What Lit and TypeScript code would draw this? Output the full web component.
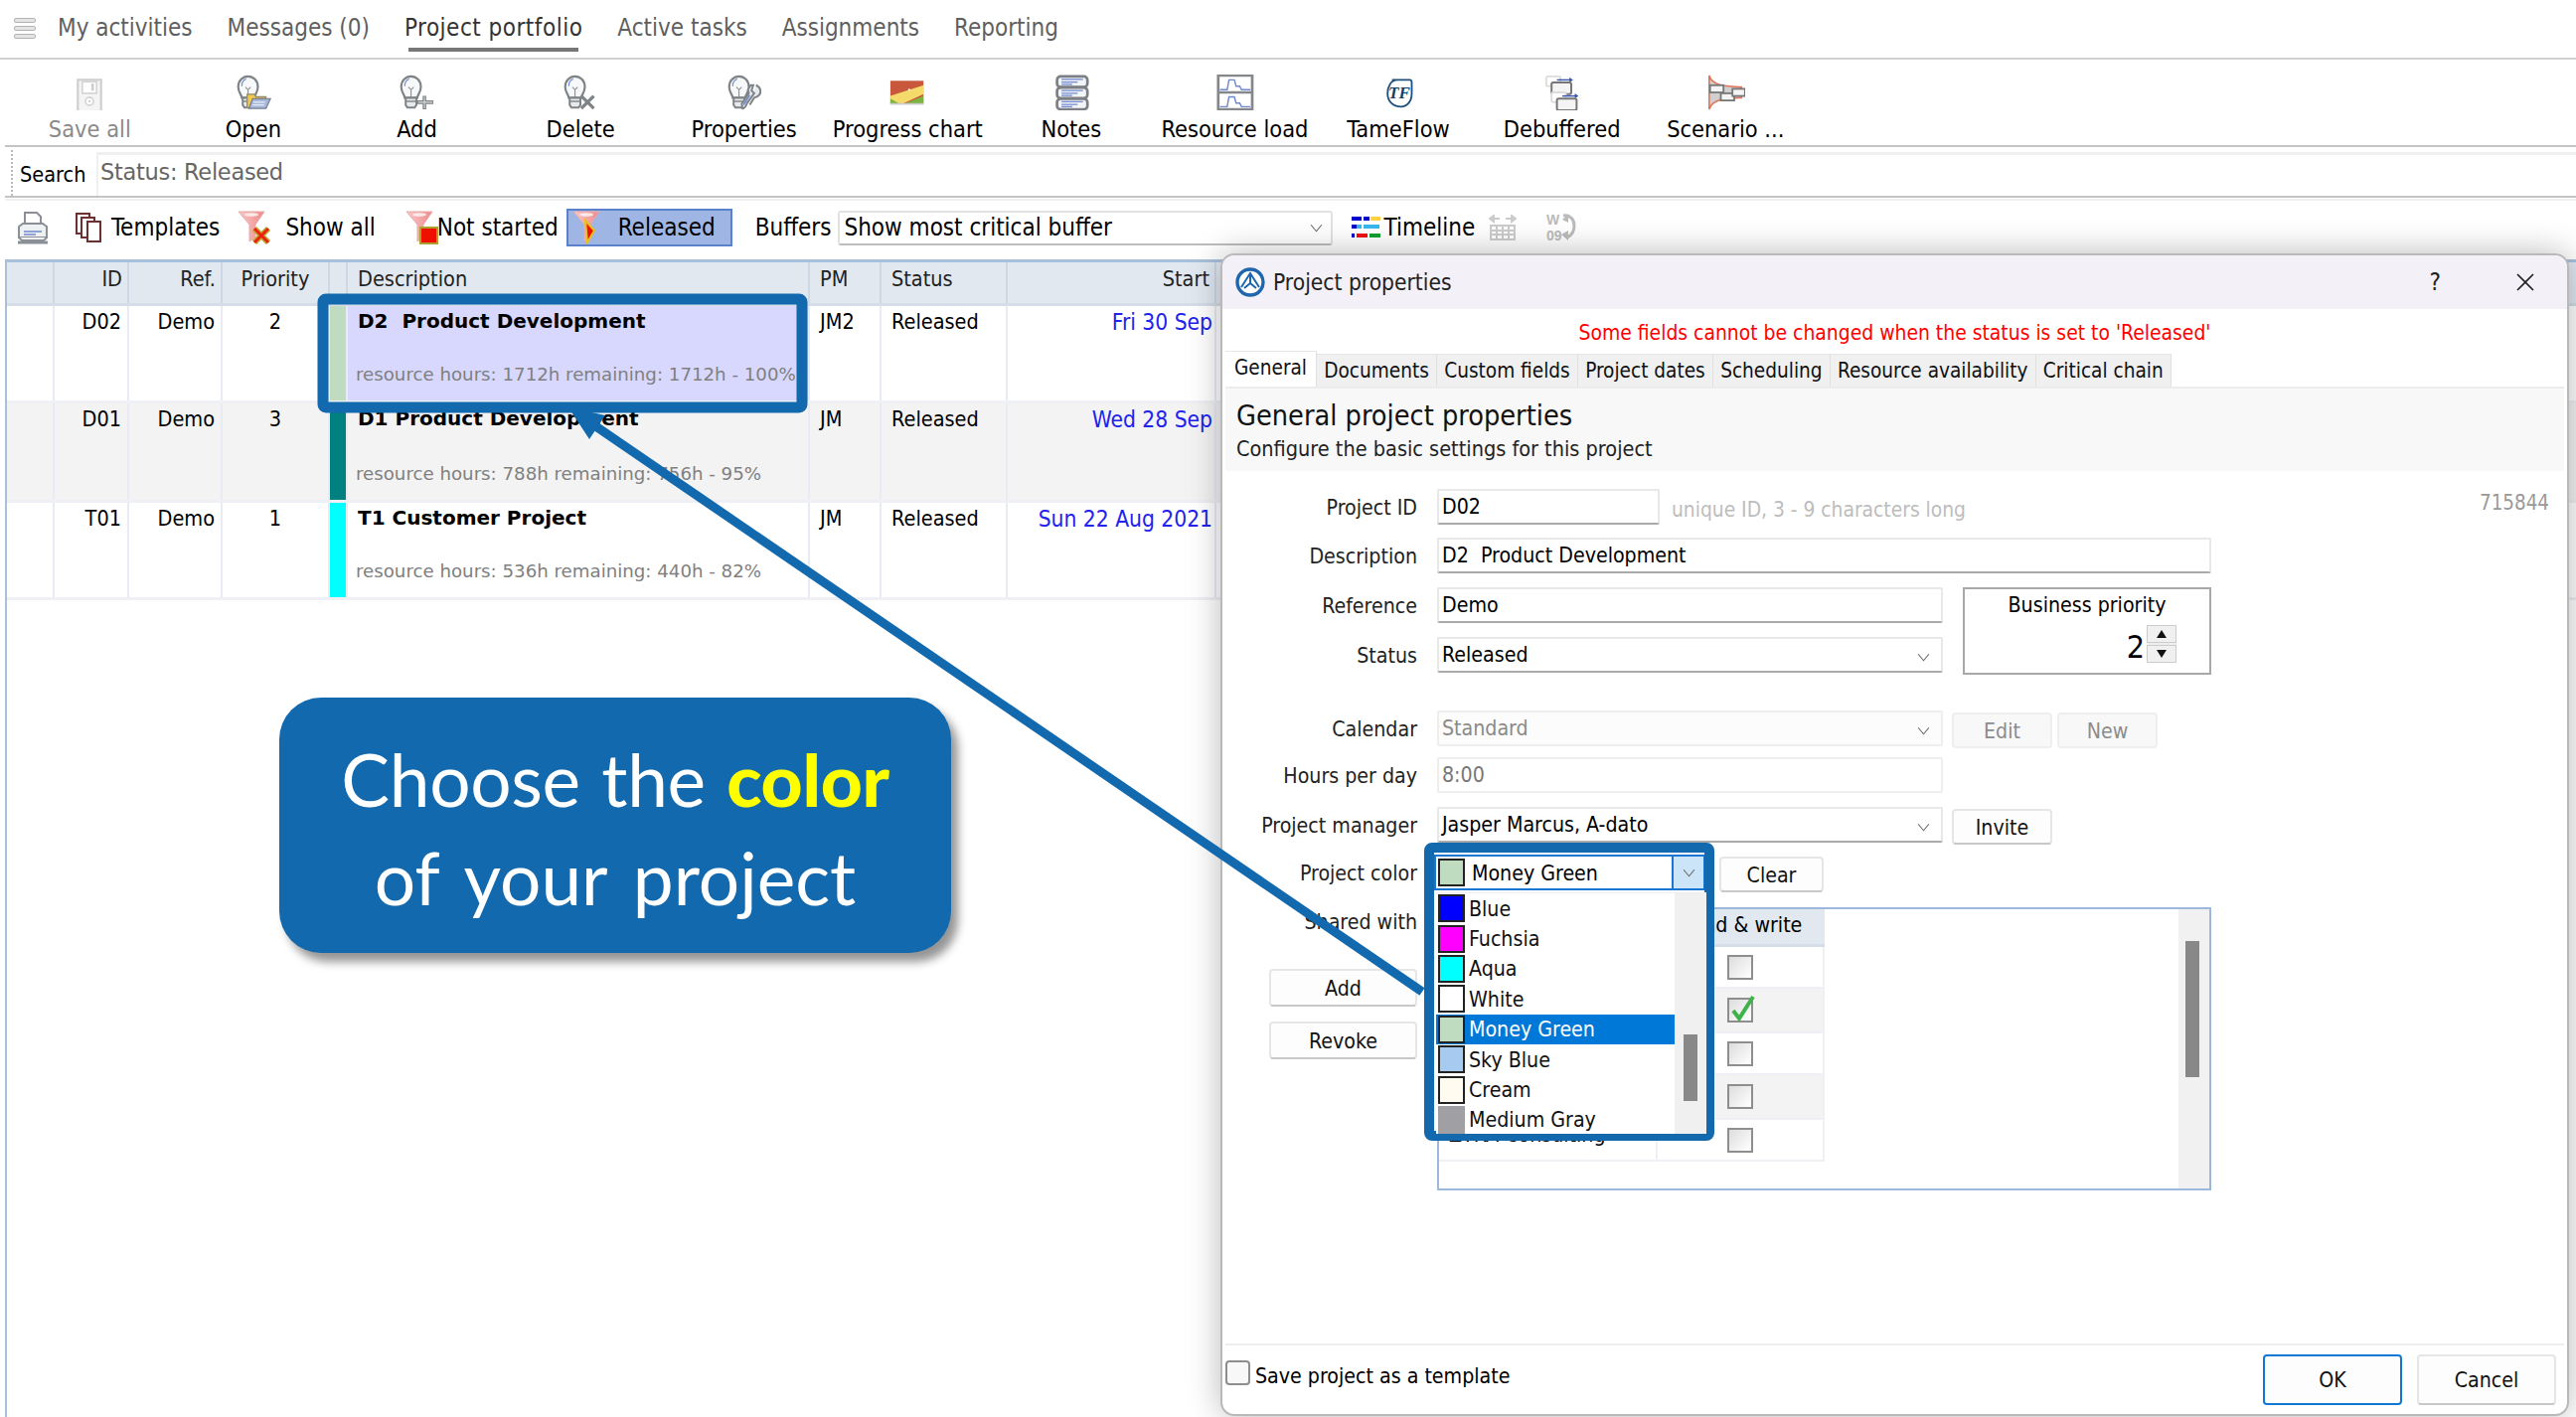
import { LitElement, html, css, svg } from "lit";
import { customElement } from "lit/decorators.js";

const bulb = (extra: unknown) => svg`
  <path d="M7 26c0-3-4-6-4-12C3 7 8 2 14 2s11 5 11 12c0 6-4 9-4 12z" fill="#f7f8fa" stroke="#7f8386" stroke-width="2.4"/>
  <path d="M7 13c0-4 2-7 5-8" fill="none" stroke="#6f8fd8" stroke-width="1.4"/>
  <path d="M11 14l3 3 3-3M14 17v9" fill="none" stroke="#8a8d90" stroke-width="1.2"/>
  <path d="M8 26h12v8l-2 3h-8l-2-3z" fill="#e8e9ea" stroke="#7f8386" stroke-width="2.2"/>
  <path d="M8 30h12" stroke="#7f8386" stroke-width="1.6"/>
  ${extra}`;

const stack = (x: number, y: number) => svg`
  <rect x=${x} y=${y} width="16" height="11" fill="#fff" stroke="#dcdcdc" stroke-width="2" rx="2"/>
  <path d="M${x + 12} ${y + 4}h16" stroke="#3a55b0" stroke-width="1.6"/>
  <path d="M${x + 26} ${y + 1}l4 3-4 3z" fill="#3a55b0"/>
  <rect x=${x + 6} y=${y + 7} width="22" height="13" fill="#f4f4f4" stroke="#777" stroke-width="2.2" rx="2"/>`;

const ICONS: Record<string, unknown> = {
  save: svg`<rect x="7" y="7" width="26" height="36" fill="#f4f4f4" stroke="#cfcfcf" stroke-width="2.4" transform="translate(0 -1) scale(1 .98)"/>
    <rect x="12" y="8" width="16" height="13" fill="#fff" stroke="#cfcfcf" stroke-width="1.6"/>
    <rect x="22" y="10" width="3" height="8" fill="#cfcfcf"/>
    <circle cx="20" cy="30" r="4.5" fill="#fff" stroke="#cfcfcf" stroke-width="1.6"/><circle cx="20" cy="30" r="1" fill="#bbb"/>`,
  open: bulb(svg`<path d="M13 37V22h8l2 3h11v12z" fill="#f5c84e" stroke="#8d8a70" stroke-width="1.4"/>
    <path d="M15 38l4-11h20l-5 11z" fill="#a8b8dc" stroke="#77808e" stroke-width="1.4"/>
    <path d="M20 31h13M19 34h13" stroke="#e7ecf5" stroke-width="1.2"/>`),
  add: bulb(svg`<path d="M29 24v15M21 31h18" stroke="#7f8386" stroke-width="4"/><path d="M29 25v13M22 31h16" stroke="#d8d9da" stroke-width="1.2"/>`),
  del: bulb(svg`<path d="M21 24l14 14M35 24L21 38" stroke="#7f8386" stroke-width="3.6"/>`),
  prop: bulb(svg`<path d="M30 12l-2 6 3 3-8 11c-1 3-3 6-5 6l-1-5 8-12-1-4 3-5z M33 12c3 1 5 4 5 7 0 4-3 6-7 7l-5 8" fill="#e8eaf0" stroke="#7f8386" stroke-width="2.2"/><path d="M26 23l-7 11" stroke="#5f80d0" stroke-width="1.5"/>`),
  chart: svg`<rect x="1" y="7" width="37" height="26" fill="#c8573c"/><path d="M1 33V24L38 12v10L14 33z" fill="#f4d96b"/><path d="M1 33v-6l11 6zM38 24v9H16z" fill="#7cb342"/><circle cx="22" cy="17" r="1.2" fill="#fff"/><path d="M1 33h37" stroke="#ccc" stroke-width="2"/>`,
  notes: svg`${[2, 14.5, 27].map(
    (y) => svg`<rect x="4" y=${y} width="34" height="12" rx="4" fill="#f3f4f7" stroke="#7c7f83" stroke-width="3"/>
      <path d="M9 ${y + 3.5}h24M9 ${y + 6.5}h18M9 ${y + 9}h12" stroke="#6f88cf" stroke-width="1.3"/>`,
  )}`,
  load: svg`<rect x="2" y="1" width="38" height="38" fill="#fff" stroke="#85888b" stroke-width="3"/><path d="M2 20h38" stroke="#85888b" stroke-width="3"/>
    <path d="M4 17h8l2-11h6l2 7h4l2 4h10M4 36h8l2-11h6l2 7h4l2 4h10" fill="none" stroke="#6f88cf" stroke-width="1.6"/>`,
  tame: svg`<path d="M13 6h20c1 0 2 1 2 3v12c0 9-5 15-12 15-9 0-15-6-15-15 0-8 4-15 11-15z" fill="#fff" stroke="#1c4f7c" stroke-width="2"/>
    <text x="21" y="27" font-size="19" font-family="Liberation Serif,serif" font-style="italic" font-weight="700" fill="#163f66" text-anchor="middle">TF</text>`,
  debuf: svg`${stack(2, 2)}${stack(8, 20)}`,
  scen: svg`<path d="M2 1c4 12 18 12 36 13v12C20 27 6 27 2 39z" fill="#cfcfcf" stroke="#e2765a" stroke-width="1.8"/>
    <rect x="3" y="12" width="15" height="8" fill="#f4f4f4" stroke="#777" stroke-width="2"/>
    <rect x="15" y="21" width="15" height="8" fill="#f4f4f4" stroke="#777" stroke-width="2"/>
    <rect x="28" y="16" width="14" height="8" fill="#f4f4f4" stroke="#777" stroke-width="2"/>`,
};

const TOOLS: [string, string, boolean?][] = [
  ["Save all", "save", true],
  ["Open", "open"],
  ["Add", "add"],
  ["Delete", "del"],
  ["Properties", "prop"],
  ["Progress chart", "chart"],
  ["Notes", "notes"],
  ["Resource load", "load"],
  ["TameFlow", "tame"],
  ["Debuffered", "debuf"],
  ["Scenario ...", "scen"],
];

const NAV = ["My activities", "Messages (0)", "Project portfolio", "Active tasks", "Assignments", "Reporting"];

const ROWS = [
  { id: "D02", ref: "Demo", pr: "2", color: "#c0dcc0", title: "D2  Product Development", sub: "resource hours: 1712h remaining: 1712h - 100%", pm: "JM2", start: "Fri 30 Sep", cls: "sel" },
  { id: "D01", ref: "Demo", pr: "3", color: "#008080", title: "D1 Product Development", sub: "resource hours: 788h remaining: 756h - 95%", pm: "JM", start: "Wed 28 Sep", cls: "alt" },
  { id: "T01", ref: "Demo", pr: "1", color: "#00ffff", title: "T1 Customer Project", sub: "resource hours: 536h remaining: 440h - 82%", pm: "JM", start: "Sun 22 Aug 2021", cls: "" },
];

const COLORS: [string, string][] = [
  ["Blue", "#0000ff"],
  ["Fuchsia", "#ff00ff"],
  ["Aqua", "#00ffff"],
  ["White", "#ffffff"],
  ["Money Green", "#c0dcc0"],
  ["Sky Blue", "#a6caf0"],
  ["Cream", "#fffbf0"],
  ["Medium Gray", "#a0a0a4"],
];

const chevron = html`<svg class="chev" viewBox="0 0 12 8"><path d="M1 1l5 6 5-6" fill="none" stroke="#666" stroke-width="1"/></svg>`;

const funnel = (extra: unknown) => html`<svg class="funnel" viewBox="0 0 34 34">
  <defs><linearGradient id="fg" x1="0" x2="1"><stop offset="0" stop-color="#f9c8c8"/><stop offset="1" stop-color="#f08a8a"/></linearGradient></defs>
  <path d="M1 1h26l-9 13v13l-6 4V14z" fill="url(#fg)" stroke="#e5aaaa" stroke-width="1"/>
  <ellipse cx="14" cy="4" rx="7" ry="1.8" fill="#fbe9e9"/>
  ${extra}
</svg>`;

const FX = svg`<path d="M17 18l14 14M31 18L17 32" stroke="#b5b030" stroke-width="6"/><path d="M17 18l14 14M31 18L17 32" stroke="#f02010" stroke-width="3"/>`;
const FS = svg`<rect x="15" y="17" width="17" height="16" fill="#f01000" stroke="#a8a030" stroke-width="2"/>`;
const FR = svg`<path d="M13 10l9 10-7 12z" fill="#f01000" stroke="#e8c020" stroke-width="2"/>`;

@customElement("app-root")
export class AppRoot extends LitElement {
  static styles = css`
    :host {
      display: block;
      position: relative;
      width: 2592px;
      height: 1426px;
      overflow: hidden;
      background: #fff;
      color: #000;
      font-family: "DejaVu Sans", sans-serif;
      font-stretch: condensed;
      font-size: 24px;
    }
    .main { display: flex; flex-direction: column; height: 1426px; }
    .nav {
      height: 58px; flex: none; display: flex; align-items: center; padding-left: 14px;
      border-bottom: 2px solid #d2d2d2; box-sizing: content-box;
    }
    .burger { width: 22px; display: flex; flex-direction: column; gap: 3px; margin-right: 22px; margin-top: -2px; }
    .burger i { display: block; height: 5px; border-radius: 2px; background: #e4e4e4; border: 1px solid #b4b4b4; box-sizing: border-box; }
    .nav a { color: #5f5f5f; font-size: 24px; margin-right: 35px; position: relative; line-height: 34px; margin-top: -2px; }
    .nav a.on { color: #333; letter-spacing: 0.5px; }
    .nav a.on::after { content: ""; position: absolute; left: 4px; right: 4px; bottom: -7px; height: 4px; background: #777; }
    .tools { height: 86px; flex: none; display: flex; border-bottom: 2px solid #c4c4c4; margin-left: 5px; padding-left: 3px; }
    .tool { width: 164.6px; flex: none; display: flex; flex-direction: column; align-items: center; }
    .tool svg { width: 40px; height: 40px; margin-top: 15px; }
    .tool span { font-size: 23.4px; line-height: 32px; margin-top: 3px; white-space: nowrap; }
    .tool.off span { color: #8a8a8a; }
    .search { height: 49px; flex: none; display: flex; margin-left: 5px; border-bottom: 2px solid #c4c4c4; position: relative; }
    .grip { width: 0; border-left: 2px dotted #bbb; margin: 3px 0 0 6px; }
    .slabel { width: 84px; padding-left: 7px; box-sizing: border-box; line-height: 56px; font-size: 21.5px; }
    .sfield { flex: 1; margin-top: 5px; border-top: 3px solid #f0f0f0; border-left: 2px solid #f0f0f0; padding-left: 2px; color: #666; font-size: 22.5px; line-height: 34px; font-stretch: normal; letter-spacing: -0.3px; }
    .filters { height: 50px; padding-top: 2px; flex: none; display: flex; align-items: center; margin-left: 5px; border-top: 2px solid #f0f0f0; margin-top: 1px; padding-left: 12px; font-size: 24px; }
    .filters svg { flex: none; }
    .print { width: 32px; height: 34px; margin-right: 27px; }
    .templ { width: 26px; height: 30px; margin-right: 10px; }
    .flabel { white-space: nowrap; }
    .funnel { width: 34px; height: 34px; }
    .m1 { margin-right: 18px; }
    .m2 { margin-left: 14px; margin-right: 30px; }
    .m3 { margin-left: -2px; }
    .released {
      width: 167px; height: 38px; box-sizing: border-box; background: #9fb5e3; border: 2px solid #5b80cc; margin-left: 8px;
      display: flex; align-items: center; padding-left: 4px; margin-right: 23px;
    }
    .released .flabel { margin-left: 12px; }
    .fsel {
      width: 498px; height: 35px; margin-left: 7px; box-sizing: border-box; border: 2px solid #e2e2e2; border-bottom-color: #bdbdbd; background: #fff;
      display: flex; align-items: center; justify-content: space-between; padding: 0 8px 0 4px; margin-right: 18px; border-radius: 3px;
    }
    .chev { width: 13px; height: 9px; flex: none; }
    .tl { width: 31px; height: 24px; margin-right: 2px; }
    .fit { width: 28px; height: 26px; margin-left: 14px; margin-right: 30px; }
    .week { width: 30px; height: 30px; }
    .grid { flex: 1; margin: 7px 0 0 5px; border-left: 2px solid #a9c0dc; border-top: 3px solid #a9c0dc; }
    .row, .head { display: grid; grid-template-columns: 48px 75px 94px 108px 18px 465px 72px 127px 210px; }
    .head { height: 44px; background: #e1e8f0; border-bottom: 3px solid #d4dde8; font-size: 21.5px; line-height: 34px; box-sizing: border-box; color: #222; }
    .head > div { border-right: 2px solid #ced8e4; padding: 0 6px; white-space: nowrap; box-sizing: border-box; }
    .head .lft { padding-left: 10px; }
    .head .pad { padding-right: 5px !important; }
    .row { height: 98px; border-bottom: 3px solid #eef0f5; box-sizing: border-box; font-size: 21.5px; line-height: 32px; }
    .row.alt { background: #f3f3f3; height: 100px; }
    .row > div { border-right: 2px solid #e8ebf2; padding: 0 6px; box-sizing: border-box; white-space: nowrap; }
    .row > div.lft { padding-left: 10px; }
    .r { text-align: right; }
    .c { text-align: center; }
    .pad { padding-right: 6px !important; }
    .bar { padding: 0 !important; }
    .descr { display: flex; flex-direction: column; justify-content: space-between; padding-bottom: 11px !important; padding-left: 8px !important; }
    .descr b { font-stretch: normal; font-size: 20px; white-space: pre; padding-left: 2px; margin-top: -1px; }
    .descr small { font-stretch: normal; font-size: 18.2px; color: #808080; line-height: 30px; }
    .row.sel .descr { background: #d8d8ff; }
    .date { color: #2222ee; text-align: right; padding-right: 2px !important; font-size: 22.6px; }

    .dlg {
      position: absolute; left: 1228px; top: 255px; width: 1357px; height: 1170px; box-sizing: border-box;
      background: #fff; border: 2px solid #b9b9b9; border-radius: 14px; box-shadow: 0 0 34px rgba(0, 0, 0, .28);
      display: flex; flex-direction: column; padding: 0 3px; font-size: 21.2px; overflow: hidden;
    }
    .title { height: 54px; margin: 0 -3px; flex: none; display: flex; align-items: center; background: #f3f0f7; padding-left: 13px; color: #222; font-size: 22.6px; }
    .title svg.logo { width: 30px; height: 30px; margin-right: 8px; }
    .title .sp { flex: 1; }
    .q { margin-right: 76px; font-size: 24px; }
    .x { width: 18px; height: 18px; margin-right: 33px; }
    .msg { height: 42px; flex: none; text-align: center; color: #f00; font-size: 20.9px; line-height: 48px; }
    .tabs { display: flex; align-items: flex-end; height: 36px; flex: none; border-bottom: 2px solid #ececec; box-sizing: content-box; font-size: 20.6px; }
    .tab { height: 33px; line-height: 32px; background: #f0f0f0; border-right: 1px solid #e0e0e0; border-top: 1px solid #e6e6e6; padding: 0 7.2px; box-sizing: border-box; white-space: nowrap; color: #111; }
    .tab.on { height: 36px; background: #fff; padding: 0 9px; line-height: 32px; }
    .panel { flex: 1; display: flex; flex-direction: column; border-bottom: 2px solid #eee; min-height: 0; }
    .phead { height: 83px; flex: none; background: #f8f8f8; padding: 8px 0 0 11px; box-sizing: border-box; }
    .phead h2 { margin: 0; font-weight: normal; font-size: 28.6px; line-height: 38px; color: #111; }
    .phead p { margin: 0; font-size: 21.5px; line-height: 30px; color: #222; }
    .form {
      position: relative; display: grid; grid-template-columns: 213px 509px 261px;
      grid-template-rows: 49px 50px 50px 74px 47px 50px 48px 53px 285px; padding-top: 18px;
    }
    .lbl { text-align: right; padding-right: 20px; line-height: 38px; color: #222; white-space: nowrap; }
    .id { position: absolute; right: 15px; top: 20px; color: #999; font-size: 20.4px; }
    .inp {
      height: 36px; box-sizing: border-box; border: 2px solid #e8e8e8; border-bottom-color: #aaa; background: #fff;
      padding: 0 3px; line-height: 30px; display: flex; align-items: center; justify-content: space-between; white-space: pre; border-radius: 2px;
    }
    .chev2 { margin-right: 8px; }
    .inp.dis { border-color: #eee; color: #8a8a8a; background: #fcfcfc; }
    .inp.ro { border-color: #eee; color: #777; }
    .idrow { display: flex; grid-column: 2 / 4; }
    .idrow .inp { width: 224px; }
    .hint { color: #bdbdbd; margin-left: 12px; line-height: 42px; font-size: 20.8px; }
    .span2 { grid-column: 2 / 4; width: 779px; }
    .biz {
      grid-column: 3; grid-row: 3 / 5; margin-left: 20px; width: 250px; height: 88px; box-sizing: border-box;
      border: 2px solid #a8a8a8; text-align: center; line-height: 32px; position: relative;
    }
    .bizv { position: absolute; right: 65px; bottom: 6px; font-size: 32px; line-height: 40px; }
    .spin { position: absolute; right: 33px; bottom: 10px; width: 30px; height: 38px; background: #eee; display: flex; flex-direction: column; gap: 2px; }
    .spin i { flex: 1; background: #f0f0f0; border: 1px solid #ccc; display: flex; align-items: center; justify-content: center; }
    .spin svg { width: 10px; height: 8px; }
    .btns { display: flex; gap: 5px; margin-left: 9px; padding-top: 2px; }
    .btn {
      height: 36px; box-sizing: border-box; border: 2px solid #e6e6e6; border-bottom-color: #c8c8c8; border-radius: 4px; background: #fdfdfd;
      display: flex; align-items: center; justify-content: center; color: #111;
    }
    .b101 { width: 101px; }
    .btn.dis { color: #8c8c8c; background: #f8f8f8; border-color: #eee; }
    .colorrow { grid-column: 2 / 4; display: flex; gap: 14px; }
    .colorsel {
      width: 273px; height: 36px; margin-left: -3px; box-sizing: border-box; border: 2px solid #1976d2; display: flex; align-items: center; position: relative; background: #fff;
    }
    .colorrow .btn { width: 105px; margin-top: 2px; }
    .sw { width: 27px; height: 28px; box-sizing: border-box; border: 2px solid #222; flex: none; margin: 0 7px 0 2px; }
    .sw.nb { border-color: #a0a0a4; }
    .dbtn { width: 30px; align-self: stretch; background: #cce4f7; border-left: 2px solid #1976d2; display: flex; align-items: center; justify-content: center; margin-left: auto; }
    .list {
      position: absolute; left: 0; top: 36px; width: 272px; height: 243px; background: #fff; z-index: 5; display: flex; flex-direction: column; overflow: hidden;
      border-top: 1px solid #eee; box-sizing: border-box;
    }
    .li { height: 30.4px; flex: none; display: flex; align-items: center; width: 240px; color: #111; }
    .li .sw { margin-right: 4px; }
    .li.on { background: #0078d7; color: #fff; }
    .lscroll { position: absolute; right: 0; top: 0; bottom: 0; width: 32px; background: #f0f0f0; }
    .lscroll i { position: absolute; left: 9px; width: 14px; top: 142px; height: 67px; background: #888; }
    .sharedcol { display: flex; flex-direction: column; align-items: flex-end; }
    .sharedcol .lbl { line-height: 30px; }
    .sharedcol .btn { width: 149px; height: 38px; margin-right: 20px; margin-top: 15px; }
    .sharedcol .btn.first { margin-top: 32px; }
    .share {
      grid-column: 2 / 4; width: 779px; height: 285px; box-sizing: border-box; border: 2px solid #9cb9dd; position: relative;
    }
    .shead { height: 38px; width: 388px; display: grid; grid-template-columns: 220px 168px; background: #e1e8f0; text-align: center; line-height: 32px; box-sizing: border-box; border-bottom: 3px solid #d4dde8; }
    .srow { width: 388px; display: grid; grid-template-columns: 220px 168px; border-bottom: 2px solid #eef0f5; box-sizing: border-box; }
    .srow.alt { background: #f3f3f3; }
    .srow > div:first-child { border-right: 2px solid #eef0f5; padding-left: 10px; line-height: 30px; }
    .srow > div:last-child { display: flex; align-items: center; padding-left: 70px; border-right: 2px solid #eef0f5; }
    .s42 { height: 42px; }
    .s45 { height: 45px; }
    .chk { width: 26px; height: 25px; box-sizing: border-box; border: 2px solid #8e8e8e; background: linear-gradient(135deg, #ddd, #fff); position: relative; }
    .chk svg { position: absolute; left: -1px; top: -6px; width: 28px; height: 30px; }
    .sscroll { position: absolute; right: 0; top: 0; bottom: 0; width: 31px; background: #f1f1f1; }
    .sscroll i { position: absolute; left: 7px; width: 14px; top: 32px; height: 137px; background: #888; }
    .foot { height: 69px; flex: none; display: flex; align-items: flex-start; }
    .foot .cb { width: 25px; height: 25px; box-sizing: border-box; border: 2px solid #8e8e8e; border-radius: 4px; margin-top: 15px; background: #f8f8f8; }
    .foot span { margin: 16px 0 0 5px; line-height: 30px; }
    .foot .sp { flex: 1; }
    .foot .btn { width: 140px; height: 51px; margin-top: 9px; }
    .foot .ok { border: 2px solid #0f78d4; margin-right: 15px; }
    .foot .cancel { margin-right: 8px; }

    .anno { position: absolute; left: 0; top: 0; width: 2592px; height: 1426px; pointer-events: none; }
    .callout {
      position: absolute; left: 281px; top: 702px; width: 676px; height: 257px; box-sizing: border-box; padding-top: 3px; background: #1369ae; border-radius: 42px;
      box-shadow: 7px 9px 10px rgba(0, 0, 0, .42);
      font-family: Lato, sans-serif; font-stretch: normal; color: #fff; font-size: 73px; text-align: center;
      display: flex; flex-direction: column; justify-content: center; line-height: 102px; word-spacing: 3px;
    }
    .callout .l1 { letter-spacing: -0.3px; margin-top: 3px; margin-bottom: -3px; }
    .callout .l2 { word-spacing: 8px; }
    .callout b { color: #ff0; font-weight: 900; }
  `;

  private select(text: string, cls = "") {
    return html`<div class="inp ${cls}">${text}<span class="chev2">${chevron}</span></div>`;
  }

  private check(on = false) {
    return html`<div class="chk">${on
      ? html`<svg viewBox="0 0 28 30"><path d="M5 17l6 8L25 3" fill="none" stroke="#3fb24a" stroke-width="4"/></svg>`
      : ""}</div>`;
  }

  render() {
    return html`
      <div class="main">
        <div class="nav">
          <div class="burger"><i></i><i></i><i></i></div>
          ${NAV.map((n, i) => html`<a class=${i === 2 ? "on" : ""}>${n}</a>`)}
        </div>
        <div class="tools">
          ${TOOLS.map(
            ([t, ic, off]) => html`<div class="tool ${off ? "off" : ""}">
              <svg viewBox="0 0 40 40">${ICONS[ic]}</svg><span>${t}</span>
            </div>`,
          )}
        </div>
        <div class="search">
          <div class="grip"></div>
          <div class="slabel">Search</div>
          <div class="sfield">Status: Released</div>
        </div>
        <div class="filters">
          <svg class="print" viewBox="0 0 32 34">
            <path d="M8 14V2h12l4 4v8" fill="#fff" stroke="#8b9096" stroke-width="2"/>
            <path d="M2 16l4-3h20l4 3v11H2z" fill="#eef0f2" stroke="#8b9096" stroke-width="2"/>
            <path d="M1 32h30" stroke="#8b9096" stroke-width="3"/>
            <path d="M7 21h18M7 24h12" stroke="#6f88cf" stroke-width="1.5"/>
            <path d="M2 27l3 3h22l3-3" fill="#eef0f2" stroke="#8b9096" stroke-width="2"/>
          </svg>
          <svg class="templ" viewBox="0 0 26 30">
            <rect x="1" y="1" width="13" height="20" fill="#fff" stroke="#6b3030" stroke-width="2"/>
            <rect x="6" y="5" width="13" height="20" fill="#fff" stroke="#6b3030" stroke-width="2"/>
            <rect x="12" y="9" width="13" height="20" fill="#fff" stroke="#6b3030" stroke-width="2"/>
          </svg>
          <span class="flabel m1">Templates</span>
          ${funnel(FX)}
          <span class="flabel m2">Show all</span>
          ${funnel(FS)}
          <span class="flabel m3">Not started</span>
          <div class="released">${funnel(FR)}<span class="flabel">Released</span></div>
          <span class="flabel">Buffers</span>
          <div class="fsel"><span>Show most critical buffer</span>${chevron}</div>
          <svg class="tl" viewBox="0 0 31 24">
            <path d="M1 3h10M13 3h6" stroke="#00c" stroke-width="4"/><path d="M20 3h10" stroke="#ffd23f" stroke-width="4"/>
            <path d="M1 11h10M13 11h16" stroke="#39b7f0" stroke-width="4"/><path d="M1 11h5" stroke="#00c" stroke-width="4"/>
            <path d="M1 20h3" stroke="#00c" stroke-width="4"/><path d="M6 20h11" stroke="#f01010" stroke-width="4"/><path d="M19 20h11" stroke="#10a030" stroke-width="4"/>
          </svg>
          <span class="flabel">Timeline</span>
          <svg class="fit" viewBox="0 0 28 26">
            <path d="M1 4h10M17 4h10M1 4l4-3v6zM27 4l-4-3v6z" stroke="#ccc" fill="#ccc" stroke-width="2"/>
            <path d="M2 11h24v14H2zM2 16h24M2 20h24M8 11v14M14 11v14M20 11v14" fill="none" stroke="#ccc" stroke-width="2"/>
          </svg>
          <svg class="week" viewBox="0 0 30 30">
            <text x="0" y="12" font-size="14" font-weight="700" fill="#bbb" font-family="Liberation Sans,sans-serif">W</text>
            <text x="0" y="28" font-size="14" font-weight="700" fill="#bbb" font-family="Liberation Sans,sans-serif">09</text>
            <path d="M17 3c7-1 11 4 11 10s-3 10-7 12" fill="none" stroke="#bbb" stroke-width="3"/>
            <path d="M15 22l7 6v-10zM16 7l6-6v9z" fill="#bbb"/>
          </svg>
        </div>
        <div class="grid">
          <div class="head">
            <div></div><div class="r pad">ID</div><div class="r pad">Ref.</div><div class="c">Priority</div><div></div>
            <div class="lft">Description</div><div class="lft">PM</div><div class="lft">Status</div><div class="r pad">Start</div>
          </div>
          ${ROWS.map(
            (r) => html`<div class="row ${r.cls}">
              <div></div><div class="r pad">${r.id}</div><div class="r pad">${r.ref}</div><div class="c">${r.pr}</div>
              <div class="bar" style="background:${r.color}"></div>
              <div class="descr"><b>${r.title}</b><small>${r.sub}</small></div>
              <div class="lft">${r.pm}</div><div class="lft">Released</div><div class="date">${r.start}</div>
            </div>`,
          )}
        </div>
      </div>

      <div class="dlg">
        <div class="title">
          <svg class="logo" viewBox="0 0 30 30">
            <circle cx="15" cy="15" r="13" fill="#fff" stroke="#1f66ad" stroke-width="3.4"/>
            <path d="M6 20L15 6l9 14M15 6v10l-6 5M15 16l6 5" fill="none" stroke="#1f66ad" stroke-width="2"/>
          </svg>
          <span>Project properties</span><span class="sp"></span><span class="q">?</span>
          <svg class="x" viewBox="0 0 18 18"><path d="M1 1l16 16M17 1L1 17" stroke="#222" stroke-width="1.7"/></svg>
        </div>
        <div class="msg">Some fields cannot be changed when the status is set to 'Released'</div>
        <div class="tabs">
          <div class="tab on">General</div>
          ${["Documents", "Custom fields", "Project dates", "Scheduling", "Resource availability", "Critical chain"].map(
            (t) => html`<div class="tab">${t}</div>`,
          )}
        </div>
        <div class="panel">
          <div class="phead">
            <h2>General project properties</h2>
            <p>Configure the basic settings for this project</p>
          </div>
          <div class="form">
            <div class="id">715844</div>
            <div class="lbl">Project ID</div>
            <div class="idrow"><div class="inp">D02</div><span class="hint">unique ID, 3 - 9 characters long</span></div>

            <div class="lbl">Description</div>
            <div class="inp span2">D2  Product Development</div>

            <div class="lbl">Reference</div>
            <div class="inp">Demo</div>
            <div class="biz">
              Business priority
              <div class="bizv">2</div>
              <div class="spin">
                <i><svg viewBox="0 0 10 8"><path d="M5 0l5 8H0z" fill="#111"/></svg></i>
                <i><svg viewBox="0 0 10 8"><path d="M5 8L0 0h10z" fill="#111"/></svg></i>
              </div>
            </div>

            <div class="lbl">Status</div>
            ${this.select("Released")}

            <div class="lbl">Calendar</div>
            ${this.select("Standard", "dis")}
            <div class="btns"><div class="btn dis b101">Edit</div><div class="btn dis b101">New</div></div>

            <div class="lbl">Hours per day</div>
            <div class="inp ro">8:00</div>
            <div></div>

            <div class="lbl">Project manager</div>
            ${this.select("Jasper Marcus, A-dato")}
            <div class="btns"><div class="btn b101">Invite</div></div>

            <div class="lbl">Project color</div>
            <div class="colorrow">
              <div class="colorsel">
                <div class="sw" style="background:#c0dcc0"></div>Money Green
                <div class="dbtn">${chevron}</div>
                <div class="list">
                  ${COLORS.map(
                    ([n, c]) => html`<div class="li ${n === "Money Green" ? "on" : ""}">
                      <div class="sw ${n === "Medium Gray" ? "nb" : ""}" style="background:${c}"></div>${n}
                    </div>`,
                  )}
                  <div class="lscroll"><i></i></div>
                </div>
              </div>
              <div class="btn">Clear</div>
            </div>

            <div class="sharedcol">
              <div class="lbl">Shared with</div>
              <div class="btn first">Add</div>
              <div class="btn">Revoke</div>
            </div>
            <div class="share">
              <div class="shead"><div></div><div>Read &amp; write</div></div>
              <div class="srow s42"><div></div><div>${this.check()}</div></div>
              <div class="srow s45 alt"><div></div><div>${this.check(true)}</div></div>
              <div class="srow s42"><div></div><div>${this.check()}</div></div>
              <div class="srow s45 alt"><div></div><div>${this.check()}</div></div>
              <div class="srow s42"><div>ZTRA Consulting</div><div>${this.check()}</div></div>
              <div class="sscroll"><i></i></div>
            </div>
          </div>
        </div>
        <div class="foot">
          <div class="cb"></div><span>Save project as a template</span><div class="sp"></div>
          <div class="btn ok">OK</div><div class="btn cancel">Cancel</div>
        </div>
      </div>

      <svg class="anno" viewBox="0 0 2592 1426">
        <path d="M598 428L1431 998" stroke="#1369ae" stroke-width="9" fill="none"/>
        <path d="M572 410L593 442L609 418z" fill="#1369ae"/>
        <rect x="325" y="301" width="482" height="109" rx="3" fill="none" stroke="#1369ae" stroke-width="11"/>
        <rect x="1438" y="853" width="282" height="290" rx="3" fill="none" stroke="#1369ae" stroke-width="10"/>
      </svg>
      <div class="callout">
        <div class="l1">Choose the <b>color</b></div>
        <div class="l2">of your project</div>
      </div>
    `;
  }
}
